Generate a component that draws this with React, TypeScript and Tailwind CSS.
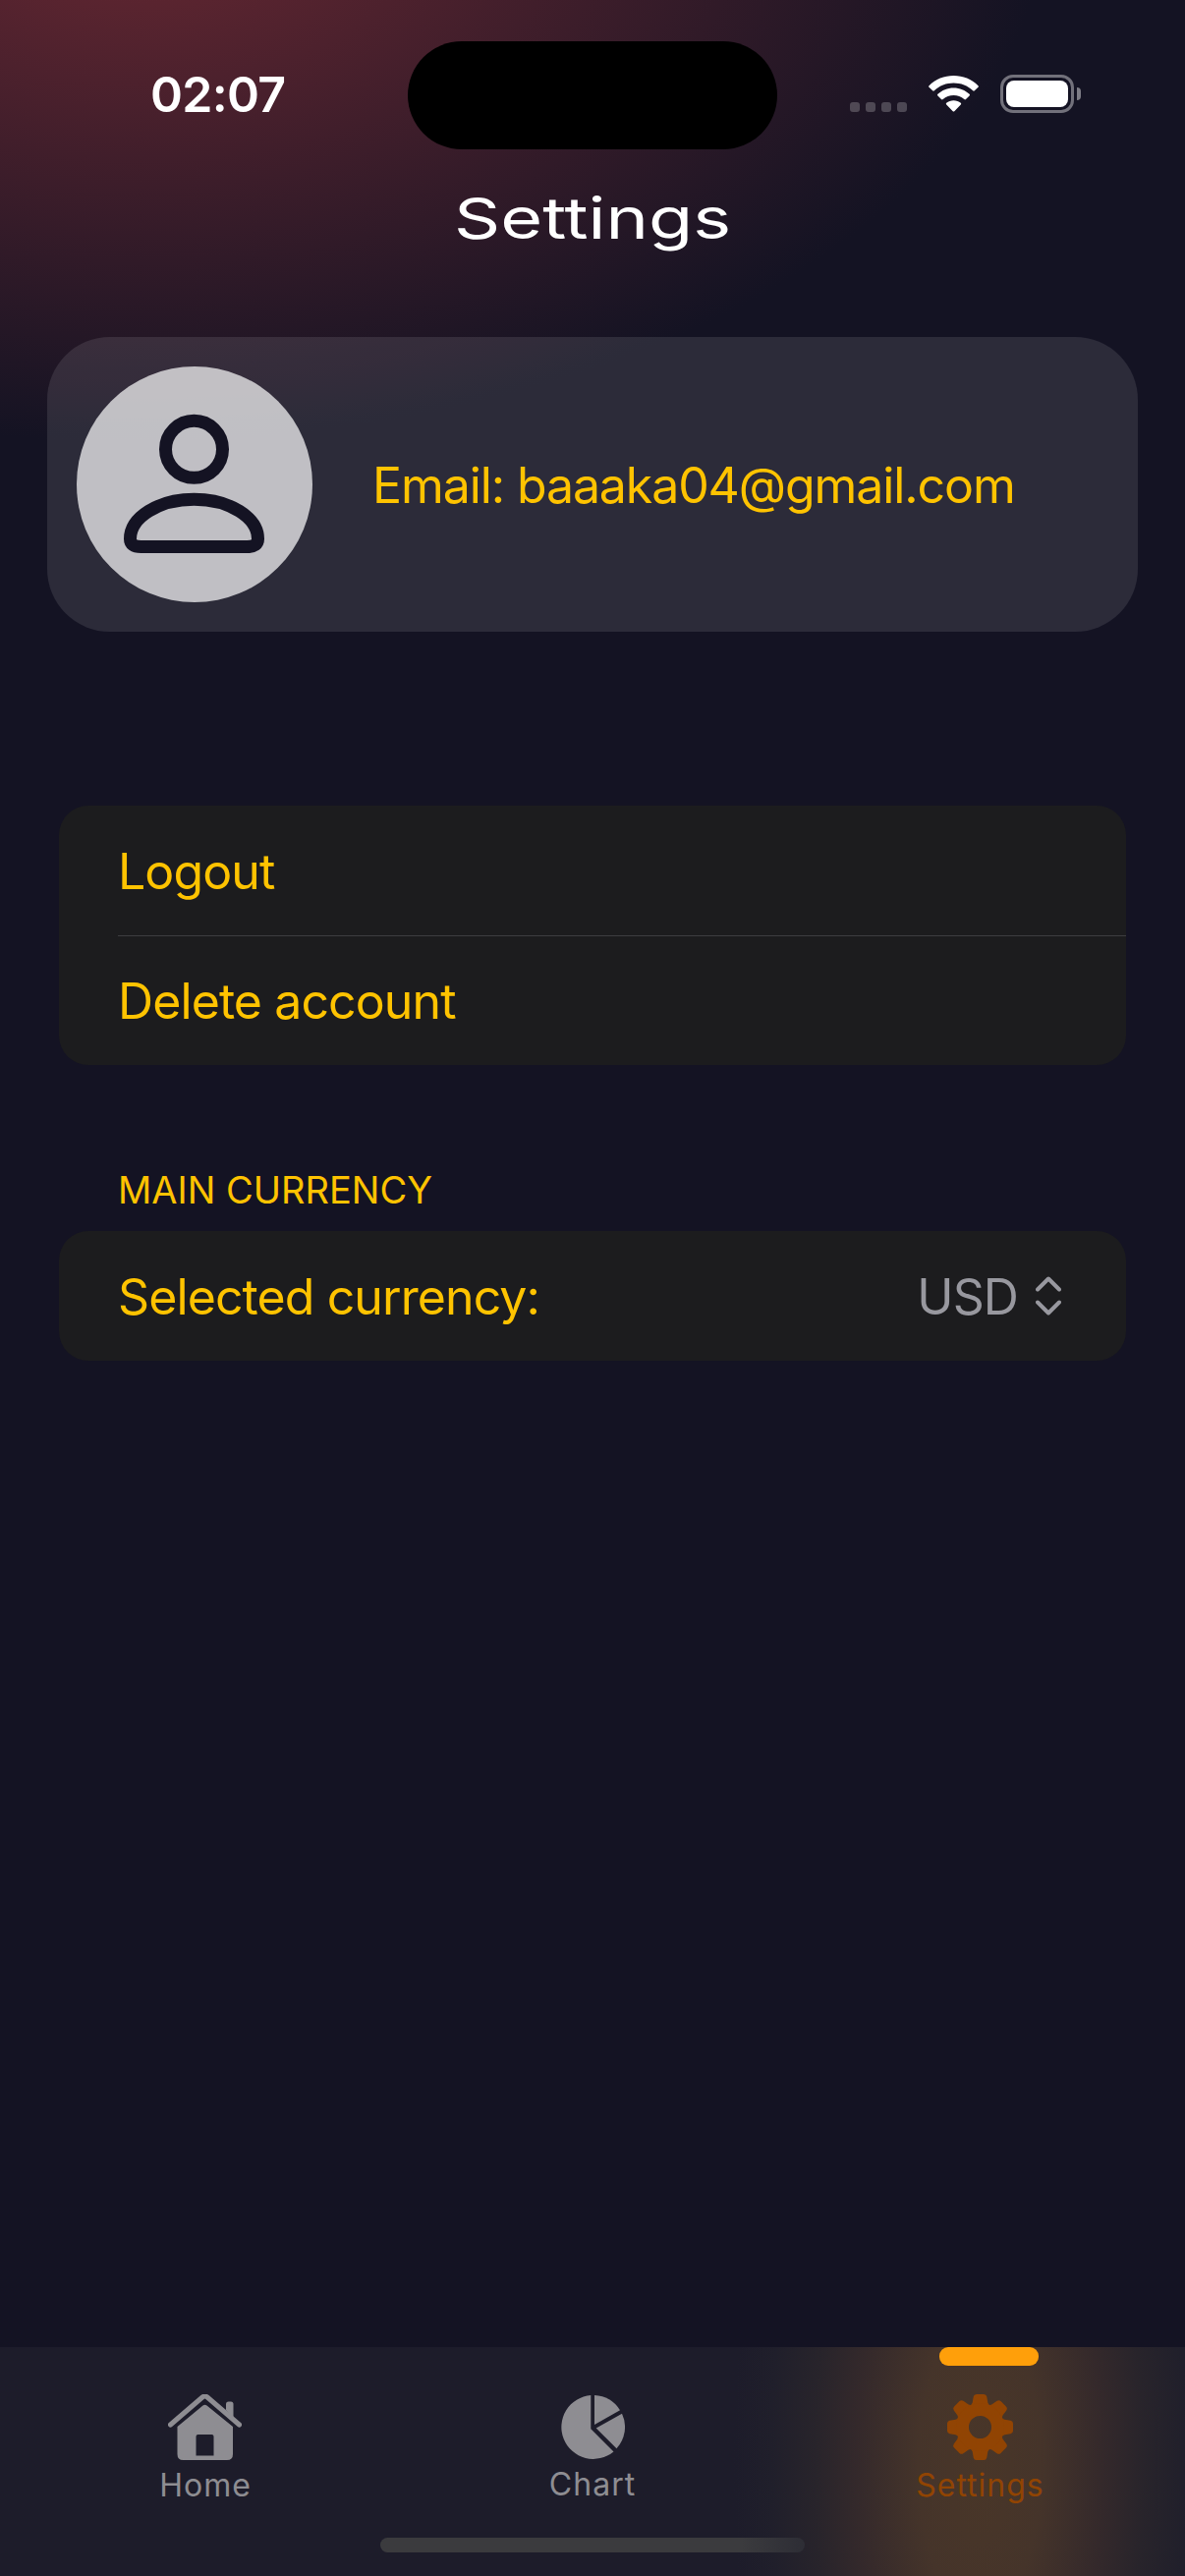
import type { ReactNode } from "react";

function StatusBar() {
  return (
    <div className="relative flex h-[172px] w-full shrink-0 items-start">
      <div className="ml-[153px] mt-[66px] w-[262px] text-[50px] leading-[60px] font-semibold tracking-[-0.7px] text-white">02:07</div>
      <div className="mt-[42px] h-[110px] w-[376px] rounded-full bg-black" />
      <div className="ml-[74px] mt-[104px] flex gap-[6px]">
        <i className="h-[10px] w-[10px] rounded-[3px] bg-white/22" />
        <i className="h-[10px] w-[10px] rounded-[3px] bg-white/22" />
        <i className="h-[10px] w-[10px] rounded-[3px] bg-white/22" />
        <i className="h-[10px] w-[10px] rounded-[3px] bg-white/22" />
      </div>
      <svg className="ml-[22px] mt-[77px] h-[37px] w-[51px]" viewBox="0 0 51 37" fill="#fff">
        <path d="M25.500 0C35 0 43.800 3.600 50.500 10.200Q51.300 11 50.500 11.800L46.800 15.300Q46 16 45.200 15.300C39.900 10.300 33 7.600 25.500 7.600S11.100 10.300 5.800 15.300Q5 16 4.200 15.300L.5 11.800Q-.3 11 .5 10.200C7.200 3.600 16 0 25.500 0Z" />
        <path d="M25.500 12.500C31.700 12.500 37.300 14.800 41.600 18.800Q42.500 19.600 41.600 20.400L38 24Q37.200 24.800 36.300 24C33.300 21.400 29.500 20 25.500 20S17.700 21.400 14.700 24Q13.800 24.800 13 24L9.400 20.400Q8.500 19.600 9.400 18.800C13.700 14.800 19.300 12.500 25.500 12.500Z" />
        <path d="M25.500 25.200C28.300 25.200 30.800 26.100 32.800 27.700Q33.700 28.500 32.800 29.400L26.300 36.200Q25.500 37 24.700 36.200L18.200 29.400Q17.300 28.500 18.200 27.700C20.200 26.100 22.700 25.200 25.500 25.200Z" />
      </svg>
      <div className="ml-[22px] mt-[76px] flex items-center gap-[3px]">
        <div className="h-[39px] w-[75px] rounded-[13px] border-[3px] border-white/40 p-[3px]">
          <div className="h-full w-full rounded-[8px] bg-white" />
        </div>
        <div className="h-[13px] w-[4px] rounded-r-full bg-white/45" />
      </div>
    </div>
  );
}

function ProfileCard() {
  return (
    <section className="mx-[48px] mt-[85px] flex h-[300px] shrink-0 items-center rounded-[64px] bg-white/10 pl-[30px]">
      <div className="h-[240px] w-[240px] shrink-0 rounded-full bg-white/70">
        <svg viewBox="0 0 240 240" className="h-full w-full" fill="none" stroke="#141323" strokeWidth="13">
          <ellipse cx="119.500" cy="84.300" rx="29" ry="29" />
          <path d="M54.500 175.500C54.500 154 83 135.300 119.500 135.300S184.500 154 184.500 175.500Q184.500 183.500 173.500 183.500H65.500Q54.500 183.500 54.500 175.500Z" />
        </svg>
      </div>
      <p className="ml-[61px] mt-[2px] whitespace-nowrap text-[50px] leading-[60px] tracking-[-1.1px] text-[#ffc300]">Email: baaaka04@gmail.com</p>
    </section>
  );
}

function Row({ children }: { children: ReactNode }) {
  return <div className="flex h-[132px] items-center whitespace-nowrap pt-[2px] text-[50px] leading-[60px] tracking-[-0.9px]">{children}</div>;
}

function SettingsList() {
  return (
    <div className="mx-[60px] mt-[177px] flex flex-col text-[#ffc300]">
      <div className="rounded-[30px] bg-[#1c1c1e] pl-[60px]">
        <div className="-mb-px border-b border-[#3d3d40]">
          <Row>Logout</Row>
        </div>
        <Row>Delete account</Row>
      </div>
      <h2 className="mt-[104px] ml-[60px] h-[65px] text-[38px] leading-[46px]">MAIN CURRENCY</h2>
      <div className="rounded-[30px] bg-[#1c1c1e] pl-[60px] pr-[66px]">
        <Row>
          <span>Selected currency:</span>
          <span className="-mt-px ml-auto text-[#98989f]">USD</span>
          <svg className="-mt-[2px] ml-[18px] h-[40px] w-[26px]" viewBox="0 0 26 40" fill="none" stroke="#98989f" strokeWidth="4" strokeLinecap="round" strokeLinejoin="round">
            <path d="M2 13.500 13 2.500 24 13.500M2 26.500 13 37.500 24 26.500" />
          </svg>
        </Row>
      </div>
    </div>
  );
}

function HomeIcon() {
  return (
    <svg className="mr-px h-[67px] w-[75px]" viewBox="0 0 75 67" fill="currentColor">
      <path d="M2.500 31 35 3Q37.500 1 40 3L72.500 31" fill="none" stroke="currentColor" strokeWidth="5" strokeLinecap="round" />
      <path d="M59 16V10Q59 7.500 61.500 7.500H64Q66.500 7.500 66.500 10V25Z" />
      <path fillRule="evenodd" d="M9.500 33 35.500 11.500Q37.500 10 39.500 11.500L66 33V61Q66 67 60 67H15.500Q9.500 67 9.500 61ZM28.500 62.500H46.500V43Q46.500 41 44.500 41H30.500Q28.500 41 28.500 43Z" />
    </svg>
  );
}

function ChartIcon() {
  return (
    <svg className="mt-px h-[65px] w-[65px]" viewBox="0 0 65 65" fill="currentColor">
      <path d="M30.300 0V34.200L53.500 57.500A32.500 32.500 0 1 1 30.300 0Z" />
      <path d="M34 0A32.500 32.500 0 0 1 60 15.200L34 30Z" />
      <path d="M62 18.700A32.500 32.500 0 0 1 56.500 54.300L35.700 33.500Z" />
    </svg>
  );
}

function GearIcon() {
  const angles = [0, 45, 90, 135, 180, 225, 270, 315];
  return (
    <svg className="h-[67px] w-[67px]" viewBox="-33.500 -33.500 67 67" fill="currentColor">
      {angles.map((a) => (
        <path key={a} transform={`rotate(${a})`} d="M-11 -21.500Q-8.300 -22.500 -7.800 -25L-6.800 -31Q-6.300 -33.500 -3.800 -33.500H3.800Q6.300 -33.500 6.800 -31L7.800 -25Q8.300 -22.500 11 -21.500Z" />
      ))}
      <circle r="18" fill="none" stroke="currentColor" strokeWidth="13" />
    </svg>
  );
}

function Tab({ icon, label }: { icon: ReactNode; label: string }) {
  return (
    <div className="flex flex-col items-center pt-[48px]">
      {icon}
      <span className="mt-[6px] text-[32px] leading-[40px] tracking-[1px]">{label}</span>
    </div>
  );
}

function TabBar() {
  return (
    <nav className="relative mt-auto h-[233px] w-full shrink-0 bg-[#1d1c2a] bg-[radial-gradient(ellipse_250px_620px_at_997px_120px,#493628_0%,#45342a_25%,#34292b_50%,#28242b_67%,#201f2b_85%,#1d1c2a_100%)]">
      <div className="absolute left-[956px] top-0 h-[19px] w-[101px] rounded-[9px] bg-[#ff9f0a]" />
      <div className="grid grid-cols-[92px_92px_133px] gap-x-[302px] pl-[163px] text-[#8e8d92]">
        <Tab icon={<HomeIcon />} label="Home" />
        <Tab icon={<ChartIcon />} label="Chart" />
        <div className="ml-[-20px] w-[133px] text-[#914403]">
          <Tab icon={<GearIcon />} label="Settings" />
        </div>
      </div>
      <div className="absolute left-[387px] top-[194px] h-[15px] w-[432px] rounded-full bg-linear-to-r from-[#3b3b3e] from-85% to-[#2d2d35]" />
    </nav>
  );
}

export default function App() {
  return (
    <main className="flex h-[2622px] w-[1206px] flex-col overflow-hidden bg-[#141323] bg-[radial-gradient(ellipse_926px_550px_at_140px_-100px,#692832_0%,#141323_100%)] font-['Inter',sans-serif]">
      <StatusBar />
      <h1 className="mt-[14px] flex h-[72px] shrink-0 items-center justify-center text-[58px] leading-[72px] text-white">
        <span className="inline-block scale-x-127">Settings</span>
      </h1>
      <ProfileCard />
      <SettingsList />
      <TabBar />
    </main>
  );
}
